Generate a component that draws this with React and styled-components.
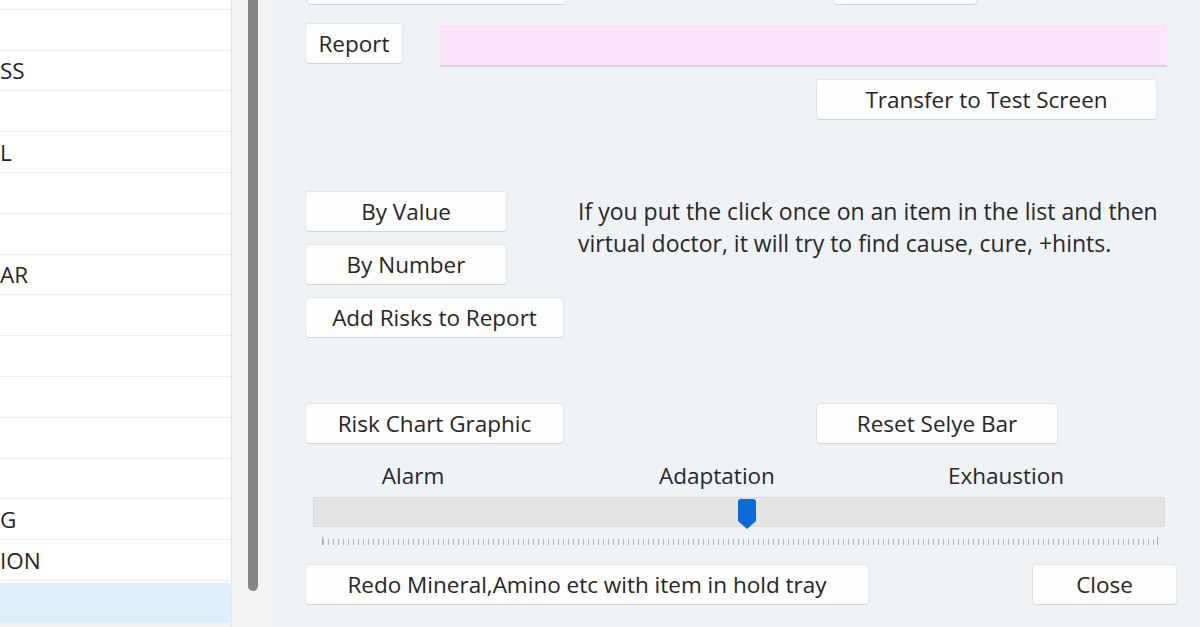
import React from "react";
import styled, {createGlobalStyle} from "styled-components";

const rows = [
  {text: ""},
  {text: ""},
  {text: "SS"},
  {text: ""},
  {text: "L"},
  {text: ""},
  {text: ""},
  {text: "AR"},
  {text: ""},
  {text: ""},
  {text: ""},
  {text: ""},
  {text: ""},
  {text: "G"},
  {text: "ION"},
  {text: "", selected: true},
];

const selyeValue = 0.5;

const App = () => {
  return (
    <>
      <GlobalStyle />
      <Window>
        <ListPanel>
          <List>
            {rows.map((row, i) => (
              <Row key={i} $selected={row.selected}>
                <RowText>{row.text}</RowText>
              </Row>
            ))}
          </List>
        </ListPanel>
        <ScrollTrack>
          <ScrollThumb />
        </ScrollTrack>
        <Main>
          <TopRow>
            <Button $w={259} />
            <Button $w={144} />
          </TopRow>
          <ReportRow>
            <Button $w={98}>Report</Button>
            <ReportField />
          </ReportRow>
          <TransferRow>
            <Button $w={341}>Transfer to Test Screen</Button>
          </TransferRow>
          <Middle>
            <ButtonStack>
              <Button $w={202}>By Value</Button>
              <Button $w={202}>By Number</Button>
              <Button $w={259}>Add Risks to Report</Button>
            </ButtonStack>
            <Hint>
              If you put the click once on an item in the list and then
              virtual doctor, it will try to find cause, cure, +hints.
            </Hint>
          </Middle>
          <RiskRow>
            <Button $w={259}>Risk Chart Graphic</Button>
            <Button $w={242}>Reset Selye Bar</Button>
          </RiskRow>
          <StageLabels>
            <span>Alarm</span>
            <span>Adaptation</span>
            <span>Exhaustion</span>
          </StageLabels>
          <SliderTrack>
            <Thumb style={{left: `${selyeValue * 100}%`}}>
              <svg width="18" height="30" viewBox="0 0 18 30">
                <path
                  d="M3 0 H15 A3 3 0 0 1 18 3 V22 L9 30 L0 22 V3 A3 3 0 0 1 3 0 Z"
                  fill="#0a6ad8"
                />
              </svg>
            </Thumb>
          </SliderTrack>
          <Ticks />
          <BottomRow>
            <Button $w={564}>Redo Mineral,Amino etc with item in hold tray</Button>
            <Button $w={145}>Close</Button>
          </BottomRow>
        </Main>
      </Window>
    </>
  );
};

const GlobalStyle = createGlobalStyle`
  html, body {
    margin: 0;
    padding: 0;
    overflow: hidden;
  }
  body {
    font-family: "Open Sans", "Noto Sans", sans-serif;
    color: #1e1e1e;
  }
`;

const Window = styled.div`
  display: flex;
  width: 1200px;
  height: 627px;
  background: #eff3f6;
  overflow: hidden;
`;

const ListPanel = styled.div`
  width: 232px;
  flex-shrink: 0;
  height: 627px;
  background: #f3f3f3;
  border-right: 1px solid #e6e6e6;
  overflow: hidden;
  box-sizing: border-box;
`;

const List = styled.div`
  margin-top: -31px;
  background: #fff;
`;

const Row = styled.div`
  height: 40.8px;
  box-sizing: border-box;
  border-bottom: 1px solid ${(p) => (p.$selected ? "#f3f3f3" : "#eceeef")};
  display: flex;
  align-items: center;
  background: ${(p) => (p.$selected ? "#deedfb" : "#fff")};
  border-radius: ${(p) => (p.$selected ? "0 4px 4px 0" : "0")};
  margin-top: ${(p) => (p.$selected ? "2px" : "0")};
  font-size: 22.5px;
  color: #252525;
`;

const RowText = styled.span`
  margin-left: 0;
`;

const ScrollTrack = styled.div`
  width: 40px;
  flex-shrink: 0;
  background: #f4f4f4;
  display: flex;
  justify-content: center;
  padding-left: 2px;
  box-sizing: border-box;
`;

const ScrollThumb = styled.div`
  width: 10px;
  height: 591px;
  background: #878787;
  border-radius: 0 0 5px 5px;
`;

const Main = styled.div`
  flex: 1;
  display: flex;
  flex-direction: column;
  padding: 0 33px;
  box-sizing: border-box;
`;

const Button = styled.div`
  width: ${(p) => p.$w}px;
  height: 41px;
  box-sizing: border-box;
  flex-shrink: 0;
  display: flex;
  align-items: center;
  justify-content: center;
  background: #fdfdfd;
  border: 1px solid #e4e6e8;
  border-bottom-color: #d2d4d6;
  border-radius: 4px;
  font-size: 22.5px;
  color: #262626;
  white-space: nowrap;
`;

const TopRow = styled.div`
  display: flex;
  gap: 267px;
  margin-top: -36px;
  padding-left: 2px;
`;

const ReportRow = styled.div`
  display: flex;
  align-items: flex-start;
  gap: 37px;
  margin-top: 18px;
`;

const ReportField = styled.div`
  flex: 1;
  height: 43px;
  margin-top: 1px;
  box-sizing: border-box;
  background: #fce2fa;
  border-bottom: 2px solid #d6d3d8;
  border-top: 1px solid #fbeafa;
`;

const TransferRow = styled.div`
  display: flex;
  justify-content: flex-end;
  padding-right: 10px;
  margin-top: 12px;
`;

const Middle = styled.div`
  display: flex;
  gap: 14px;
  margin-top: 71px;
`;

const ButtonStack = styled.div`
  width: 259px;
  display: flex;
  flex-direction: column;
  gap: 12px;
`;

const Hint = styled.p`
  margin: 4px 0 0;
  font-size: 23px;
  line-height: 32px;
  color: #282828;
`;

const RiskRow = styled.div`
  display: flex;
  gap: 252px;
  margin-top: 65px;
`;

const StageLabels = styled.div`
  display: grid;
  grid-template-columns: 200px 408px 170px;
  margin-top: 20px;
  margin-left: 8px;
  font-size: 22.5px;
  line-height: 24px;
  color: #282828;
  span {
    text-align: center;
  }
`;

const SliderTrack = styled.div`
  position: relative;
  width: 852px;
  height: 30px;
  margin-top: 9px;
  margin-left: 8px;
  box-sizing: border-box;
  background: #e2e4e5;
  border: 1px solid #d7d9da;
  border-radius: 2px;
`;

const Thumb = styled.div`
  position: absolute;
  top: 1px;
  width: 18px;
  height: 30px;
  margin-left: -1px;
  line-height: 0;
`;

const Ticks = styled.div`
  width: 836px;
  height: 8px;
  margin-top: 10px;
  margin-left: 17px;
  border-left: 1px solid #a9adb1;
  border-right: 1px solid #a9adb1;
  box-sizing: border-box;
  background: repeating-linear-gradient(
      to right,
      #b4b8bb 0 1px,
      transparent 1px 5px
    )
    0 2px / 100% 6px no-repeat;
`;

const BottomRow = styled.div`
  display: flex;
  justify-content: space-between;
  margin-top: 19px;
  margin-right: -10px;
`;

export default App;
